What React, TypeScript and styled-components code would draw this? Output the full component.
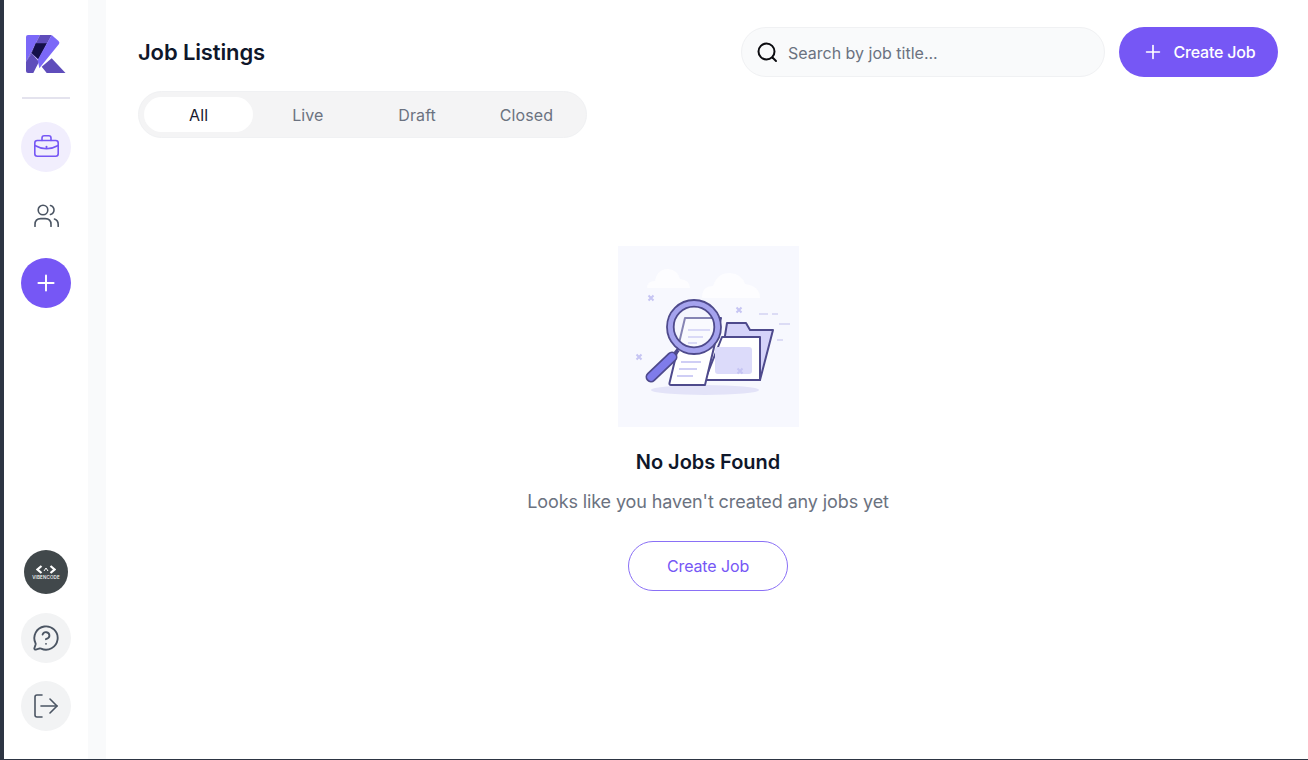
import React from "react";
import styled, { createGlobalStyle } from "styled-components";
import { Plus, MessageCircleQuestion } from "lucide-react";

const GlobalStyle = createGlobalStyle`
  html, body {
    margin: 0;
    padding: 0;
    height: 100%;
    background: #ffffff;
  }
  * {
    box-sizing: border-box;
  }
`;

const Page = styled.div`
  display: flex;
  width: 1308px;
  height: 760px;
  overflow: hidden;
  font-family: Inter, "Noto Sans", sans-serif;
  border-bottom: 1px solid #2d3543;
`;

const Edge = styled.div`
  width: 4px;
  background: #2d3543;
`;

const Sidebar = styled.nav`
  width: 84px;
  display: flex;
  flex-direction: column;
  align-items: center;
  padding: 35px 0 28px;
`;

const Logo = styled.svg`
  display: block;
`;

const Divider = styled.div`
  width: 48px;
  height: 2px;
  margin: 24px 0 23px;
  background: #e4e3ee;
`;

const NavList = styled.div`
  display: flex;
  flex-direction: column;
  align-items: center;
  gap: 18px;
`;

const NavButton = styled.button<{ $tone?: "active" | "add" | "muted" }>`
  width: 50px;
  height: 50px;
  padding: 0;
  border: none;
  border-radius: 50%;
  display: flex;
  align-items: center;
  justify-content: center;
  color: ${(p) =>
    p.$tone === "active" ? "#7657f5" : p.$tone === "add" ? "#ffffff" : "#4b5563"};
  background: ${(p) =>
    p.$tone === "active"
      ? "#f1eefd"
      : p.$tone === "add"
      ? "#7657f5"
      : p.$tone === "muted"
      ? "#f2f3f4"
      : "transparent"};
`;

const SidebarBottom = styled.div`
  margin-top: auto;
  display: flex;
  flex-direction: column;
  align-items: center;
  gap: 18px;
`;

const Avatar = styled.div`
  width: 44px;
  height: 44px;
  margin-bottom: 1px;
  border-radius: 50%;
  background: #41484b;
  color: #ffffff;
  display: flex;
  flex-direction: column;
  align-items: center;
  justify-content: center;
  gap: 1px;
  padding-top: 2px;
`;

const AvatarText = styled.span`
  font-size: 4.5px;
  line-height: 6px;
  letter-spacing: 0.15px;
  font-weight: 500;
`;

const Gutter = styled.div`
  width: 18px;
  background: #f9fafb;
`;

const Main = styled.main`
  flex: 1;
  display: flex;
  flex-direction: column;
  padding: 27px 30px 0 32px;
`;

const TopRow = styled.header`
  display: flex;
  align-items: center;
  gap: 14px;
`;

const Title = styled.h1`
  margin: 1px auto 0 0;
  font-size: 22px;
  line-height: 49px;
  font-weight: 600;
  letter-spacing: -0.13px;
  color: #0f172a;
`;

const SearchBox = styled.label`
  width: 364px;
  height: 50px;
  display: flex;
  align-items: center;
  gap: 10px;
  padding: 0 14px;
  border: 1px solid #f0f1f3;
  border-radius: 25px;
  background: #f9fafb;
  color: #0b0b0f;
`;

const SearchInput = styled.input`
  flex: 1;
  min-width: 0;
  padding: 2px 0 0;
  border: none;
  outline: none;
  background: transparent;
  font-family: inherit;
  font-size: 16px;
  letter-spacing: 0;
  &::placeholder {
    color: #6b7280;
    opacity: 1;
  }
`;

const PrimaryButton = styled.button`
  width: 159px;
  height: 50px;
  display: flex;
  align-items: center;
  justify-content: center;
  gap: 10px;
  border: none;
  border-radius: 25px;
  background: #7657f5;
  color: #ffffff;
  font-family: inherit;
  font-size: 16px;
  font-weight: 500;
  letter-spacing: -0.2px;
`;

const Tabs = styled.div`
  width: 449px;
  height: 47px;
  margin-top: 14px;
  padding: 5px;
  display: grid;
  grid-template-columns: repeat(4, 1fr);
  border: 1px solid #f0f1f3;
  border-radius: 24px;
  background: #f4f4f5;
`;

const Tab = styled.div<{ $active?: boolean }>`
  display: flex;
  align-items: center;
  justify-content: center;
  border-radius: 18px;
  font-size: 16px;
  letter-spacing: 0.1px;
  background: ${(p) => (p.$active ? "#ffffff" : "transparent")};
  color: ${(p) => (p.$active ? "#1a1a2e" : "#6b7280")};
`;

const Empty = styled.section`
  display: flex;
  flex-direction: column;
  align-items: center;
  margin-top: 108px;
`;

const IllustrationArt = styled.svg`
  display: block;
  filter: blur(0.45px);
`;

const EmptyTitle = styled.h2`
  margin: 21px 0 0;
  font-size: 20px;
  line-height: 28px;
  font-weight: 600;
  letter-spacing: -0.05px;
  color: #0f172a;
`;

const EmptyText = styled.p`
  margin: 12px 0 0;
  font-size: 18px;
  line-height: 28px;
  letter-spacing: -0.11px;
  color: #6b7280;
`;

const OutlineButton = styled.button`
  width: 160px;
  height: 50px;
  margin-top: 25px;
  background: #ffffff;
  border: 1px solid #8a70f6;
  border-radius: 25px;
  color: #7657f5;
  font-family: inherit;
  font-size: 16px;
  font-weight: 400;
  letter-spacing: -0.12px;
`;

const LogoMark = () => (
  <Logo width="40" height="38" viewBox="0 0 40 38">
    <path d="M2 0H14L0 27V2Q0 0 2 0Z" fill="#7b68f8" />
    <path d="M14 0H25.7L12.3 25L5.7 18.3L0 27Z" fill="#5f4dbb" />
    <path d="M9.7 8.3H20.7L12.3 24L5.7 18.3Z" fill="#15104a" />
    <path d="M0 26.7L5.7 18.3L13 26.7L7.3 38H2Q0 38 0 36Z" fill="#5f4dbb" />
    <path d="M25.7 0L32.5 6Q34 7.5 33 9L13.3 33.3L11.7 25Z" fill="#7b68f8" />
    <path d="M25.7 23.3L39.5 38H20.7L15.7 31.7Z" fill="#5f4dbb" />
  </Logo>
);

const BriefcaseIcon = () => (
  <svg width="25" height="24" viewBox="0 0 25 24" fill="none" stroke="currentColor" strokeWidth="1.6" strokeLinejoin="round" strokeLinecap="round">
    <rect x="0.8" y="5.5" width="23.4" height="15.7" rx="2.5" />
    <path d="M8 5.5V3Q8 0.8 10.2 0.8H14.8Q17 0.8 17 3V5.5" />
    <path d="M0.8 10.5Q12.5 17 24.2 10.5" />
    <path d="M12.5 11.8V12.2" strokeWidth="2" />
  </svg>
);

const UsersIcon = () => (
  <svg width="25" height="24" viewBox="0 0 25 24" fill="none" stroke="currentColor" strokeWidth="1.6" strokeLinecap="round">
    <circle cx="9" cy="7" r="4.8" />
    <path d="M1 23.4V21.5Q1 15.6 6.8 15.6H11.2Q17 15.6 17 21.5V23.4" />
    <path d="M16.5 2.5Q20 3.6 20 7T16.5 11.5" />
    <path d="M20.5 16Q24.2 17.4 24.2 21.5V23.4" />
  </svg>
);

const LogoutIcon = () => (
  <svg width="24" height="24" viewBox="0 0 24 24" fill="none" stroke="currentColor" strokeWidth="1.6" strokeLinecap="round" strokeLinejoin="round">
    <path d="M8 1H3Q1 1 1 3V21Q1 23 3 23H8" />
    <path d="M7 12H23" />
    <path d="M16 5L23 12L16 19" />
  </svg>
);

const SearchIcon = () => (
  <svg width="22" height="22" viewBox="0 0 22 22" fill="none" stroke="currentColor" strokeWidth="2" strokeLinecap="round">
    <circle cx="10.5" cy="10.5" r="8" />
    <path d="M16.5 16.5L20 20" />
  </svg>
);

const CrossMark = ({ x, y }: { x: number; y: number }) => (
  <path d={`M${x - 2.5} ${y - 2.5}L${x + 2.5} ${y + 2.5}M${x + 2.5} ${y - 2.5}L${x - 2.5} ${y + 2.5}`} stroke="#c6c5f3" strokeWidth="2" />
);

const Illustration = () => (
  <IllustrationArt width="181" height="181" viewBox="0 0 181 181">
    <rect width="181" height="181" fill="#f7f8fe" />
    <path d="M29 42Q29 35 37 35Q39 23 50 23Q60 24 62 33Q72 34 72 42Z" fill="#fdfdff" />
    <path d="M84 52Q84 40 95 40Q99 27 112 27Q124 28 127 38Q142 40 142 52Z" fill="#fdfdff" />
    <ellipse cx="87" cy="144" rx="54" ry="5" fill="#e3e3f8" />
    <CrossMark x={33} y={52} />
    <CrossMark x={121} y={64} />
    <CrossMark x={21} y={111} />
    <path d="M141 68H150M154 68H160M161 78H172M159 94H165" stroke="#dcdcf5" strokeWidth="1.8" />
    <path d="M100 134L109 77H128L132 84H155L142 134Z" fill="#d5d3f9" stroke="#4e4a8c" strokeWidth="2" strokeLinejoin="round" />
    <path d="M87 134L104 91H142V134Z" fill="#ffffff" stroke="#4e4a8c" strokeWidth="2" strokeLinejoin="round" />
    <rect x="97" y="101" width="37" height="27" rx="3" fill="#dcdbfa" />
    <CrossMark x={122} y={125} />
    <path d="M67 72H103L87 139H53Q51 139 51.5 137Z" fill="#ffffff" stroke="#4e4a8c" strokeWidth="2" strokeLinejoin="round" />
    <path d="M63 116H83M61 123H79M59 130H75M70 84H92M70 91H85M70 97H79" stroke="#cfcef5" strokeWidth="2" />
    <circle cx="76" cy="81" r="20" fill="#eef0fd" fillOpacity="0.35" />
    <circle cx="76" cy="81" r="23.5" fill="none" stroke="#a5a3ee" strokeWidth="6" />
    <circle cx="76" cy="81" r="27" fill="none" stroke="#4e4a8c" strokeWidth="1.8" />
    <circle cx="76" cy="81" r="20.3" fill="none" stroke="#4e4a8c" strokeWidth="1.8" />
    <path d="M60 104L56 109" stroke="#4e4a8c" strokeWidth="4" />
    <path d="M54 111L33 131" stroke="#4e4a8c" strokeWidth="11" strokeLinecap="round" />
    <path d="M54 111L33 131" stroke="#7f7cea" strokeWidth="7.5" strokeLinecap="round" />
  </IllustrationArt>
);

export default function App() {
  return (
    <Page>
      <GlobalStyle />
      <Edge />
      <Sidebar>
        <LogoMark />
        <Divider />
        <NavList>
          <NavButton $tone="active" aria-label="Jobs">
            <BriefcaseIcon />
          </NavButton>
          <NavButton aria-label="Candidates">
            <UsersIcon />
          </NavButton>
          <NavButton $tone="add" aria-label="Add">
            <Plus size={26} strokeWidth={1.8} />
          </NavButton>
        </NavList>
        <SidebarBottom>
          <Avatar>
            <svg width="20" height="9" viewBox="0 0 20 9" fill="none" stroke="#ffffff" strokeWidth="2.2">
              <path d="M5.5 1L1.5 4.5L5.5 8M14.5 1L18.5 4.5L14.5 8" />
              <path d="M8 6L10 3L12 6" strokeWidth="1" />
            </svg>
            <AvatarText>VIBENCODE</AvatarText>
          </Avatar>
          <NavButton $tone="muted" aria-label="Help">
            <MessageCircleQuestion size={28} strokeWidth={1.6} />
          </NavButton>
          <NavButton $tone="muted" aria-label="Log out">
            <LogoutIcon />
          </NavButton>
        </SidebarBottom>
      </Sidebar>
      <Gutter />
      <Main>
        <TopRow>
          <Title>Job Listings</Title>
          <SearchBox>
            <SearchIcon />
            <SearchInput placeholder="Search by job title..." />
          </SearchBox>
          <PrimaryButton>
            <Plus size={22} strokeWidth={1.8} />
            Create Job
          </PrimaryButton>
        </TopRow>
        <Tabs>
          <Tab $active>All</Tab>
          <Tab>Live</Tab>
          <Tab>Draft</Tab>
          <Tab>Closed</Tab>
        </Tabs>
        <Empty>
          <Illustration />
          <EmptyTitle>No Jobs Found</EmptyTitle>
          <EmptyText>Looks like you haven't created any jobs yet</EmptyText>
          <OutlineButton>Create Job</OutlineButton>
        </Empty>
      </Main>
    </Page>
  );
}
